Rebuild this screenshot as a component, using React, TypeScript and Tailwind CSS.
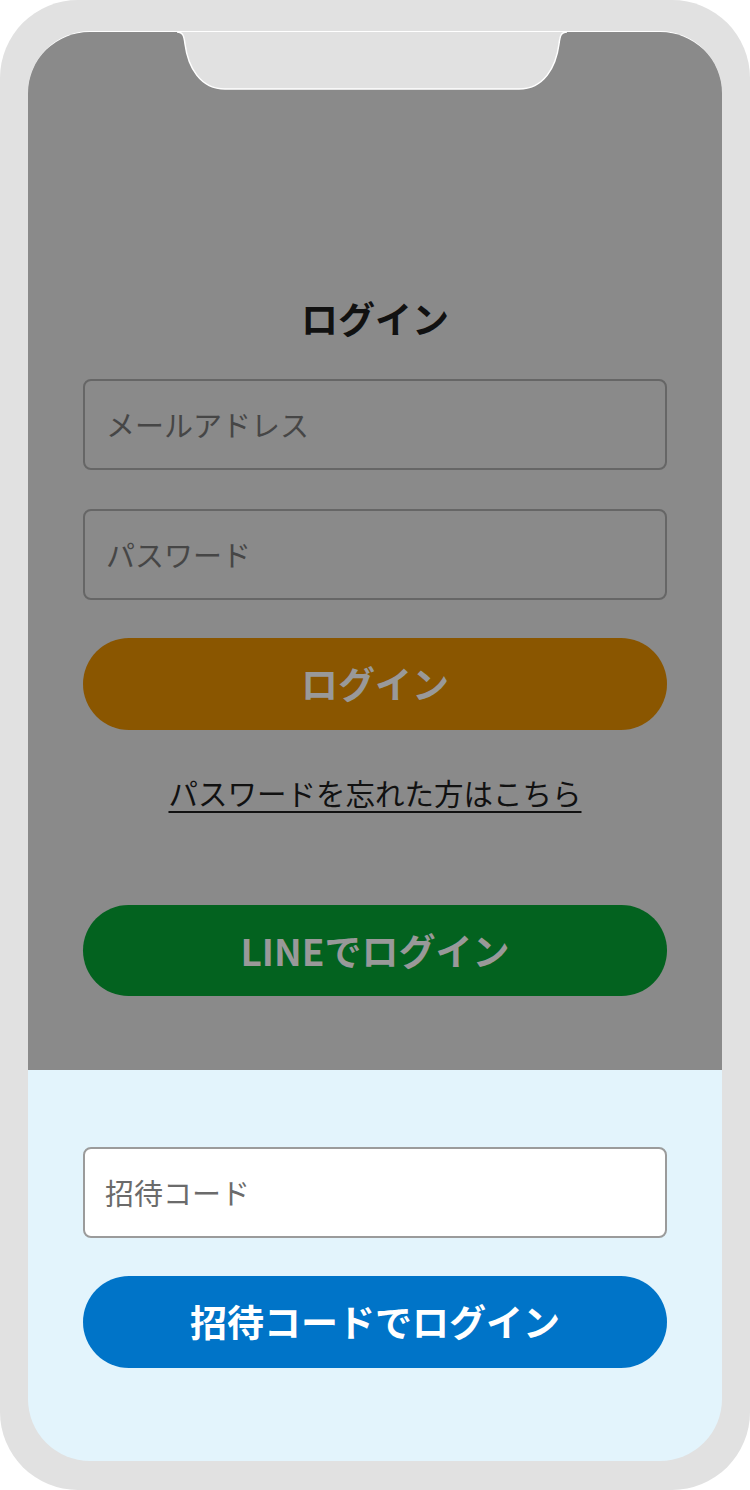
const jp = "font-['Noto_Sans_CJK_JP','Noto_Sans',sans-serif]";

function Notch() {
  return (
    <svg
      className="absolute left-[149px] top-[-1px]"
      width="390"
      height="60"
      viewBox="0 0 390 60"
    >
      <path
        d="M0 1 C6 1 7 5 8 13 C11 36 23 58 48 58 L342 58 C367 58 379 36 382 13 C383 5 384 1 390 1 L390 0 L0 0 Z"
        fill="#e1e1e1"
      />
      <path
        d="M0 1 C6 1 7 5 8 13 C11 36 23 58 48 58 L342 58 C367 58 379 36 382 13 C383 5 384 1 390 1"
        fill="none"
        stroke="#ffffff"
        strokeWidth="1.5"
      />
    </svg>
  );
}

export default function App() {
  return (
    <div className={`w-[750px] h-[1490px] bg-[#e1e1e1] rounded-[78px] pt-[31px] pb-[29px] px-[28px] ${jp}`}>
      <div className="relative w-full h-full rounded-[62px] overflow-hidden border-t border-white flex flex-col">
        <Notch />

        {/* dimmed login form */}
        <div className="bg-[#8a8a8a] h-[1038px] shrink-0 px-[55px] pt-[262px] flex flex-col">
          <div className="h-[48px] leading-[48px] text-center text-[37px] font-bold text-[#111]">
            ログイン
          </div>

          <div className="mt-[37px] h-[91px] rounded-[8px] border-2 border-[#666] flex items-center px-[21px] text-[29px] text-[#464646]">
            メールアドレス
          </div>
          <div className="mt-[39px] h-[91px] rounded-[8px] border-2 border-[#666] flex items-center px-[21px] text-[29px] text-[#464646]">
            パスワード
          </div>

          <div className="mt-[38px] h-[92px] rounded-full bg-[#8a5600] flex items-center justify-center text-[37px] font-bold text-[#999]">
            ログイン
          </div>

          <div className="mt-[42px] h-[40px] leading-[40px] text-center text-[29.5px] text-[#111]">
            <span className="underline underline-offset-[6px] decoration-2">
              パスワードを忘れた方はこちら
            </span>
          </div>

          <div className="mt-[93px] h-[91px] rounded-full bg-[#03621f] flex items-center justify-center text-[37px] font-bold text-[#999]">
            LINEでログイン
          </div>
        </div>

        {/* invite code sheet */}
        <div className="flex-1 bg-[#e3f4fc] px-[55px] pt-[77px] flex flex-col">
          <div className="h-[91px] rounded-[8px] border-2 border-[#9b9b9b] bg-white flex items-center px-[20px] text-[29px] text-[#6b6b6b]">
            招待コード
          </div>
          <div className="mt-[38px] h-[92px] rounded-full bg-[#0074c8] flex items-center justify-center text-[37px] font-bold text-white">
            招待コードでログイン
          </div>
        </div>
      </div>
    </div>
  );
}
